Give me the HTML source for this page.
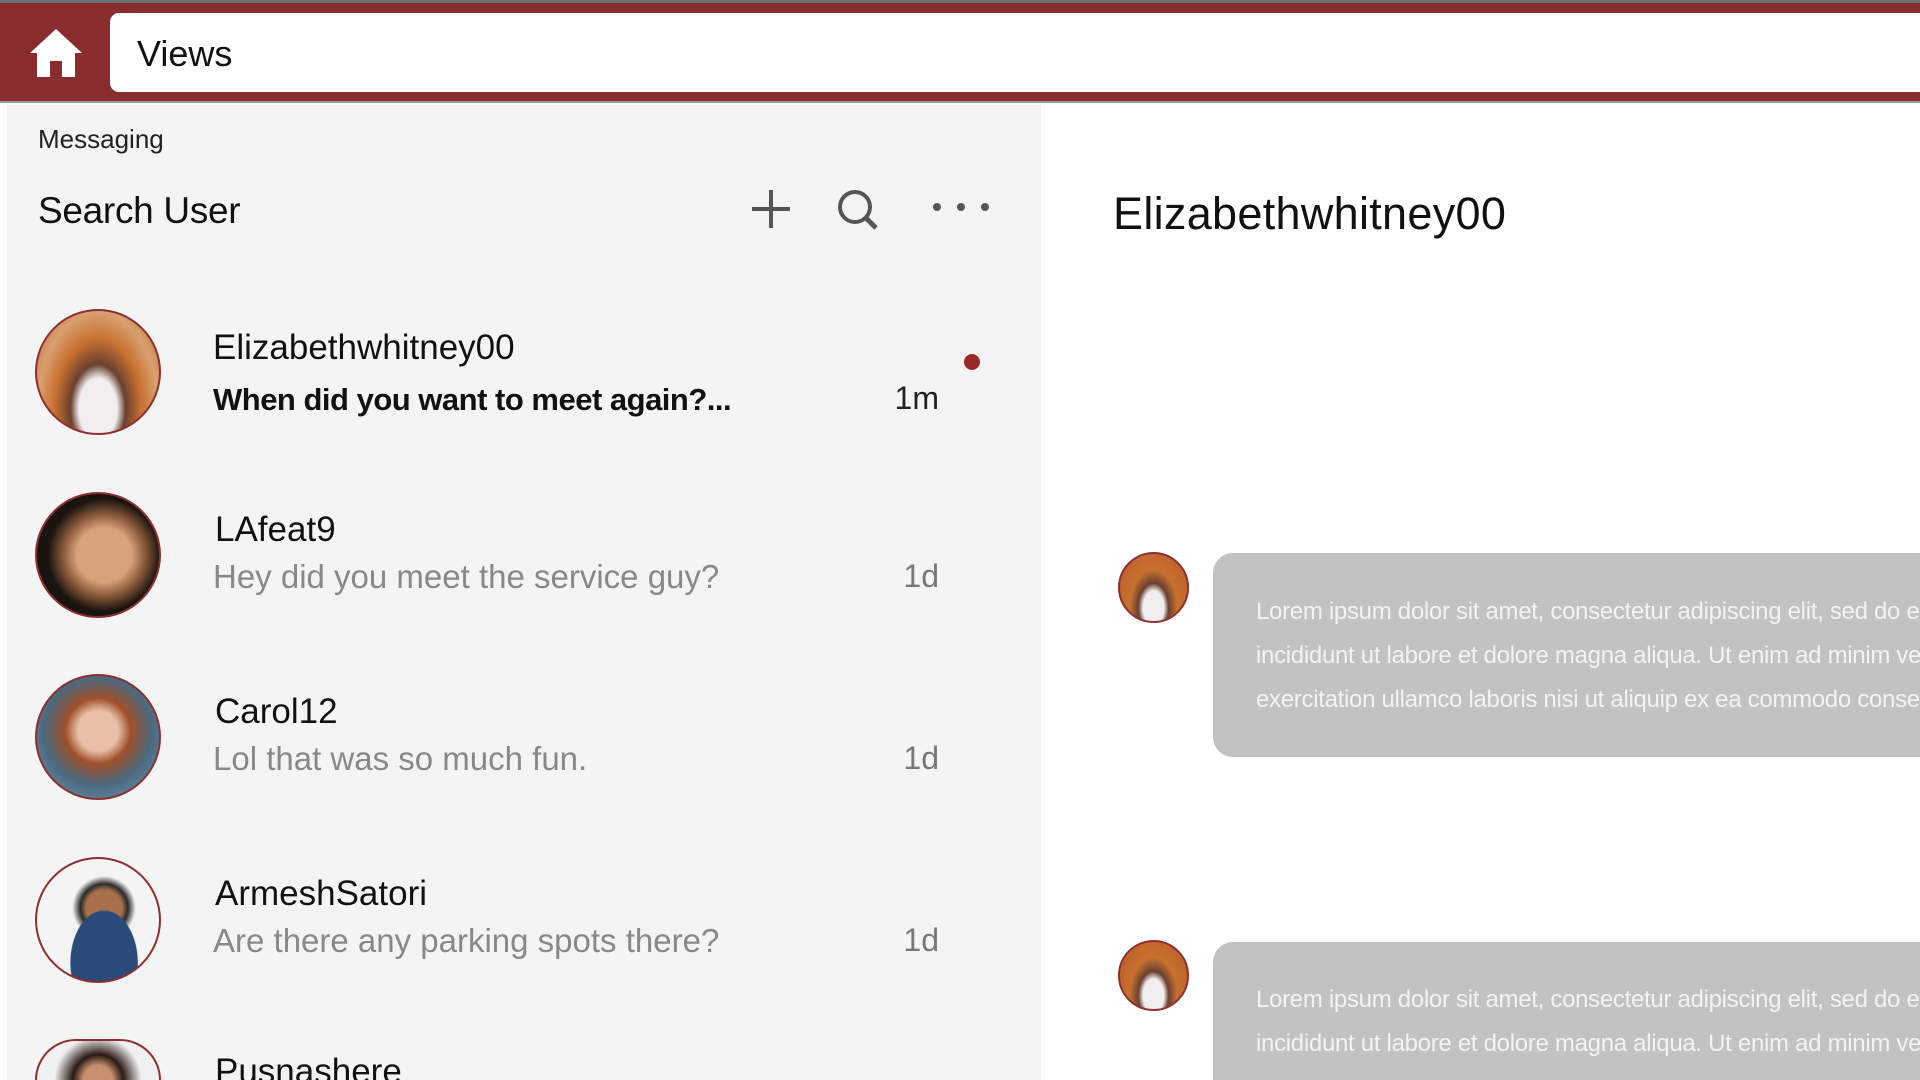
<!DOCTYPE html>
<html style="overflow:hidden;width:1920px;height:1080px"><head><meta charset="utf-8"><style>
*{margin:0;padding:0;box-sizing:border-box}
body{width:1920px;height:1080px;overflow:hidden;background:#fff;font-family:"Liberation Sans",sans-serif;position:relative}
#w{position:absolute;left:0;top:0;width:1920px;height:1080px;overflow:hidden}
.bar{position:absolute;left:0;top:0;width:1920px;height:103px;background:#882c2e;border-top:3px solid #6e6e6e;border-bottom:2px solid #9a9a9a}
.field{position:absolute;left:110px;top:10px;right:0;height:79px;background:#fff;border-radius:9px 0 0 9px}
.views{position:absolute;left:137px;font-size:36px;color:#111}
.left{position:absolute;left:7px;top:105px;width:1034px;height:975px;background:#f4f4f4}
.t{position:absolute;white-space:nowrap}
.av{position:absolute;border-radius:50%;border:2px solid #8d2f2f;overflow:hidden}
.name{font-size:35px;color:#111}
.msg{font-size:33px;color:#888}
.time{font-size:32px;color:#777;text-align:right;width:80px}
.bub{position:absolute;left:1213px;width:707px;background:#c2c2c2;border-radius:20px 0 0 20px}
.lt{position:absolute;left:1256px;font-size:24px;color:#f3f3f3;white-space:nowrap;letter-spacing:-0.3px}
</style></head><body><div id="w">
<div class="bar">
<svg style="position:absolute;left:28px;top:24px" width="56" height="52" viewBox="0 0 56 52"><path d="M28 2 L2 26 L9 26 L9 50 L22 50 L22 34 L34 34 L34 50 L47 50 L47 26 L54 26 Z" fill="#fff"/></svg>
<div class="field"></div>
<div class="t views" style="top:30px">Views</div>
</div>
<div class="left"></div>
<div class="t" style="left:38px;top:124px;font-size:26px;color:#222">Messaging</div>
<div class="t" style="left:38px;top:190px;font-size:37px;color:#111;letter-spacing:-0.3px">Search User</div>
<svg style="position:absolute;left:750px;top:188px" width="42" height="42"><path d="M21 2V40M2 21H40" stroke="#555" stroke-width="4"/></svg>
<svg style="position:absolute;left:836px;top:188px" width="44" height="44"><circle cx="19" cy="19" r="15" fill="none" stroke="#555" stroke-width="4"/><path d="M30 30L40 40" stroke="#555" stroke-width="5"/></svg>
<svg style="position:absolute;left:930px;top:200px" width="62" height="14"><circle cx="7" cy="7" r="4" fill="#555"/><circle cx="31" cy="7" r="4" fill="#555"/><circle cx="55" cy="7" r="4" fill="#555"/></svg>

<div class="av" style="left:35px;top:309px;width:126px;height:126px;background:radial-gradient(ellipse at 50% 80%,#f0eeee 0 22%,#6a4030 32%,#c7702f 50%,#d9a070 70%,#b85a2a)"></div>
<div class="t name" style="left:213px;top:328px">Elizabethwhitney00</div>
<div class="t" style="left:213px;top:382px;font-size:31px;font-weight:bold;color:#111;letter-spacing:-0.5px">When did you want to meet again?...</div>
<div class="t time" style="left:859px;top:380px;color:#222">1m</div>
<div style="position:absolute;left:964px;top:354px;width:16px;height:16px;border-radius:50%;background:#9a2a2a"></div>

<div class="av" style="left:35px;top:492px;width:126px;height:126px;background:radial-gradient(circle at 55% 50%,#d8a27c 0 30%,#8a5a3a 45%,#1a1410 62%)"></div>
<div class="t name" style="left:215px;top:510px">LAfeat9</div>
<div class="t msg" style="left:213px;top:558px">Hey did you meet the service guy?</div>
<div class="t time" style="left:859px;top:558px">1d</div>

<div class="av" style="left:35px;top:674px;width:126px;height:126px;background:radial-gradient(circle at 50% 45%,#e8c0a8 0 22%,#a0502a 36%,#4a6a80 60%,#7aa0b8)"></div>
<div class="t name" style="left:215px;top:692px">Carol12</div>
<div class="t msg" style="left:213px;top:740px">Lol that was so much fun.</div>
<div class="t time" style="left:859px;top:740px">1d</div>

<div class="av" style="left:35px;top:857px;width:126px;height:126px;background:radial-gradient(ellipse at 55% 85%,#2a4a7a 0 35%,transparent 36%),radial-gradient(circle at 55% 40%,#a8704a 0 18%,#2a2a2a 24%,#f4f4f4 32%)"></div>
<div class="t name" style="left:215px;top:874px">ArmeshSatori</div>
<div class="t msg" style="left:213px;top:922px">Are there any parking spots there?</div>
<div class="t time" style="left:859px;top:922px">1d</div>

<div class="av" style="left:35px;top:1039px;width:126px;height:41px;border-radius:63px 63px 0 0;border-bottom:none;background:radial-gradient(circle at 50% 100%,#c89070 0 20%,#2a1a14 35%,#f0f0f0 60%)"></div>
<div class="t name" style="left:215px;top:1052px;height:28px;overflow:hidden">Pusnashere</div>

<div class="t" style="left:1113px;top:188px;font-size:45px;color:#111;letter-spacing:0.3px">Elizabethwhitney00</div>

<div class="av" style="left:1118px;top:552px;width:71px;height:71px;background:radial-gradient(ellipse at 50% 80%,#f0eeee 0 22%,#6a4030 32%,#c7702f 50%,#b85a2a)"></div>
<div class="bub" style="top:553px;height:204px"></div>
<div class="lt" style="top:598px">Lorem ipsum dolor sit amet, consectetur adipiscing elit, sed do eiusmod</div>
<div class="lt" style="top:642px">incididunt ut labore et dolore magna aliqua. Ut enim ad minim veniam</div>
<div class="lt" style="top:686px">exercitation ullamco laboris nisi ut aliquip ex ea commodo consequat</div>

<div class="av" style="left:1118px;top:940px;width:71px;height:71px;background:radial-gradient(ellipse at 50% 80%,#f0eeee 0 22%,#6a4030 32%,#c7702f 50%,#b85a2a)"></div>
<div class="bub" style="top:942px;height:138px;border-radius:20px 0 0 0"></div>
<div class="lt" style="top:986px">Lorem ipsum dolor sit amet, consectetur adipiscing elit, sed do eiusmod</div>
<div class="lt" style="top:1030px">incididunt ut labore et dolore magna aliqua. Ut enim ad minim veniam</div>
</div></body></html>
